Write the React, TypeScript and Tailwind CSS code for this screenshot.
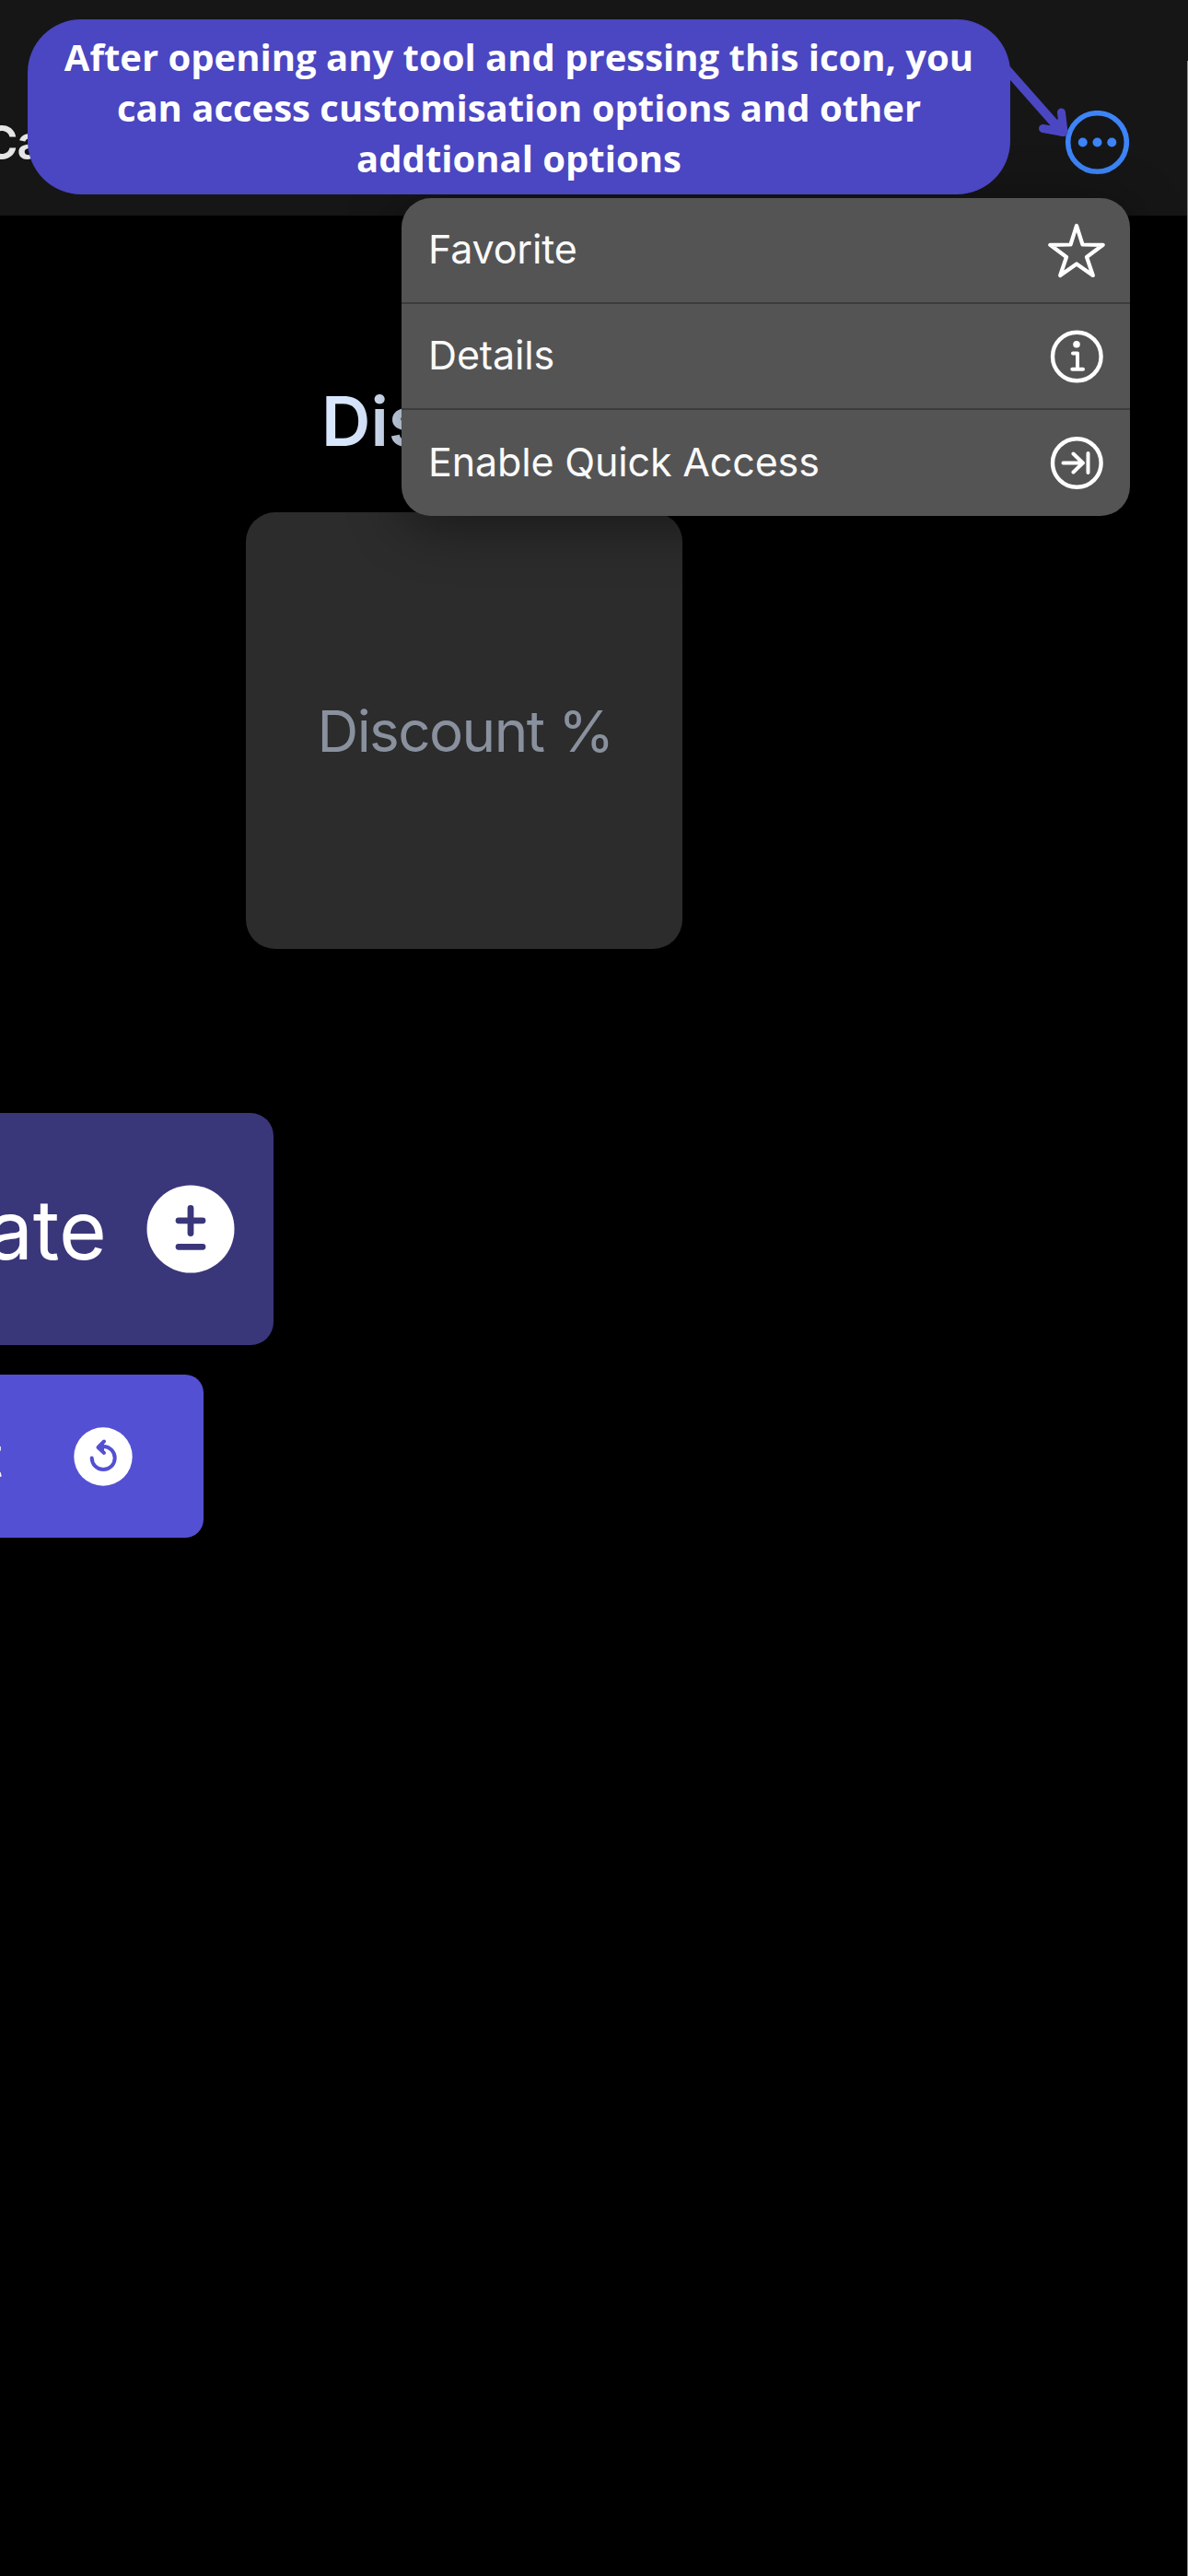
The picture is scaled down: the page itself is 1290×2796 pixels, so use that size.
import React from "react";

function Callout() {
  return (
    <div className="absolute left-[30px] top-[21px] z-30 flex h-[190px] w-[1067px] flex-col items-center rounded-[58px] bg-[#4b46c1] pt-[13px] font-['Open_Sans',sans-serif] text-[40px] font-bold leading-[55px] whitespace-nowrap text-white">
      <span>After opening any tool and pressing this icon, you</span>
      <span>can access customisation options and other</span>
      <span>addtional options</span>
    </div>
  );
}

function CalloutArrow() {
  return (
    <svg className="absolute left-[1080px] top-[60px] z-20" width="90" height="100" viewBox="0 0 90 100" fill="none" stroke="#4b46c1" strokeLinecap="round" strokeLinejoin="round">
      <path d="M8 9.500 L73 83" strokeWidth="9.500" />
      <path d="M52.500 79.500 L75 83.500 L72.500 62" strokeWidth="9" />
      <path d="M52.500 79.500 L75 83.500 L72.500 62 L66 74 Z" fill="#4b46c1" stroke="none" />
    </svg>
  );
}

function MoreIcon() {
  return (
    <svg className="h-[70px] w-[70px]" viewBox="0 0 70 70" fill="#3c84f7">
      <circle cx="35.500" cy="34.500" r="31.800" fill="none" stroke="#3c84f7" strokeWidth="5.600" />
      <circle cx="19.700" cy="34.500" r="5" />
      <circle cx="35.500" cy="34.500" r="5" />
      <circle cx="51.300" cy="34.500" r="5" />
    </svg>
  );
}

const iconProps = {
  width: 64,
  height: 64,
  viewBox: "0 0 64 64",
  fill: "none",
  stroke: "#fff",
  strokeLinecap: "round" as const,
  strokeLinejoin: "round" as const,
};

function StarIcon() {
  return (
    <svg {...iconProps} strokeWidth="4.200">
      <path d="M32 5 L38.500 25.500 L60.700 25.800 L43 39 L49.800 59 L32 46.500 L14.200 59 L21 39 L3.300 25.800 L25.500 25.500 Z" />
    </svg>
  );
}

function InfoIcon() {
  return (
    <svg {...iconProps} strokeWidth="4.400">
      <circle cx="32.300" cy="32" r="26.300" />
      <circle cx="32" cy="18.700" r="3.800" fill="#fff" stroke="none" />
      <path d="M28 28.500 H33 V45.500 M27.300 45.700 H39" strokeWidth="4" />
    </svg>
  );
}

function QuickIcon() {
  return (
    <svg {...iconProps} strokeWidth="4.400">
      <circle cx="32.300" cy="31.500" r="26.300" />
      <path d="M17.500 31.500 H39 M28.500 21.500 L38.800 31.500 L28.500 41.500 M44.500 21 V42" strokeWidth="4" />
    </svg>
  );
}

function MenuRow({ label, children }: { label: string; children: React.ReactNode }) {
  return (
    <li className="flex h-[115.500px] items-center justify-between border-b-2 border-[#3c3c3c] pl-[29px] pr-[26px] last:border-b-0">
      <span className="pb-[3px] text-[43px] leading-none tracking-[-0.150px] text-[#fafafa]">{label}</span>
      {children}
    </li>
  );
}

function Menu() {
  return (
    <ul className="absolute left-[436px] top-[215px] z-10 flex h-[345px] w-[791px] flex-col overflow-hidden rounded-[32px] bg-[#545454] shadow-[0_10px_60px_rgba(0,0,0,0.45)]">
      <MenuRow label="Favorite"><StarIcon /></MenuRow>
      <MenuRow label="Details"><InfoIcon /></MenuRow>
      <MenuRow label="Enable Quick Access"><QuickIcon /></MenuRow>
    </ul>
  );
}

function PlusMinusIcon() {
  return (
    <svg className="shrink-0" width="96" height="96" viewBox="0 0 96 96">
      <circle cx="48" cy="48" r="47.500" fill="#fff" />
      <path d="M48 25.500 V52.500 M35 38.800 H61 M35 67.300 H61" fill="none" stroke="#3a367a" strokeWidth="6.800" strokeLinecap="round" />
    </svg>
  );
}

function ResetIcon() {
  return (
    <svg className="shrink-0" width="64" height="64" viewBox="0 0 64 64">
      <circle cx="32" cy="32" r="31.700" fill="#fff" />
      <path d="M19.700 33.500 A12.500 12.500 0 1 0 32.200 21" fill="none" stroke="#5450d3" strokeWidth="4" strokeLinecap="round" />
      <path d="M33 15.500 L26.500 22 L33 28 Z" fill="#5450d3" stroke="none" />
      <path d="M33 15.500 L26.500 22 L33 28" fill="none" stroke="#5450d3" strokeWidth="4" strokeLinecap="round" strokeLinejoin="round" />
    </svg>
  );
}

export default function App() {
  return (
    <div className="relative flex h-[2796px] w-[1290px] flex-col overflow-hidden bg-black font-['Inter',sans-serif]">
      <header className="flex h-[234px] shrink-0 items-start justify-between bg-[#161616] pr-[64px]">
        <span className="-ml-[18px] mt-[124px] text-[51px] font-semibold leading-[62px] tracking-[-1px] text-[#e6e6e6]">Ca</span>
        <span className="mt-[120px]"><MoreIcon /></span>
      </header>

      <main className="flex flex-col items-start">
        <h1 className="ml-[349px] mt-[178px] text-[74px] font-semibold leading-[90px] text-[#d9e7fd]">Dis</h1>
        <div className="ml-[267px] mt-[54px] flex h-[474px] w-[474px] items-center justify-center rounded-[32px] bg-[#2c2c2c] pl-[2px] text-[62px] tracking-[-1.600px] text-[#8a919e]">
          Discount %
        </div>
        <button className="mt-[178px] flex h-[252px] w-[297px] items-center justify-end rounded-r-[25px] bg-[#3a367a] pr-[42px] text-[89px] leading-none text-white">
          <span className="mr-[43px]">ate</span>
          <PlusMinusIcon />
        </button>
        <button className="mt-[32px] flex h-[177px] w-[221px] items-center justify-end rounded-r-[20px] bg-[#5450d3] pr-[77px] text-[60px] leading-none text-white">
          <span className="mr-[77px]">t</span>
          <ResetIcon />
        </button>
      </main>

      <CalloutArrow />
      <Callout />
      <Menu />
      <div className="absolute right-0 top-[66px] z-40 h-[2730px] w-px bg-[#8f8f8d]" />
    </div>
  );
}
